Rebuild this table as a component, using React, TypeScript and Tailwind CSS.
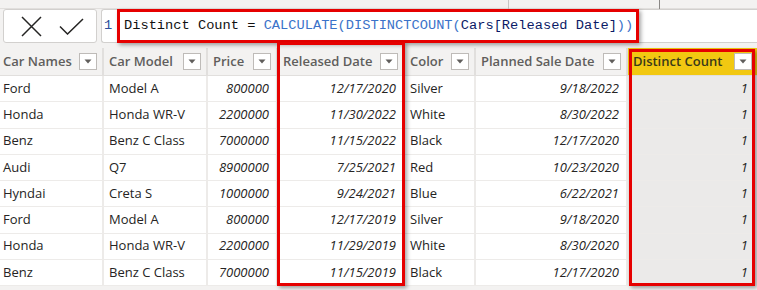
import React from "react";

const rows: string[][] = [
  ["Ford", "Model A", "800000", "12/17/2020", "Silver", "9/18/2022", "1"],
  ["Honda", "Honda WR-V", "2200000", "11/30/2022", "White", "8/30/2022", "1"],
  ["Benz", "Benz C Class", "7000000", "11/15/2022", "Black", "12/17/2020", "1"],
  ["Audi", "Q7", "8900000", "7/25/2021", "Red", "10/23/2020", "1"],
  ["Hyndai", "Creta S", "1000000", "9/24/2021", "Blue", "6/22/2021", "1"],
  ["Ford", "Model A", "800000", "12/17/2019", "Silver", "9/18/2020", "1"],
  ["Honda", "Honda WR-V", "2200000", "11/29/2019", "White", "8/30/2020", "1"],
  ["Benz", "Benz C Class", "7000000", "11/15/2019", "Black", "12/17/2020", "1"],
];

const numCols = [false, false, true, true, false, true, true];
const headers = ["Car Names", "Car Model", "Price", "Released Date", "Color", "Planned Sale Date", "Distinct Count"];

function Drop() {
  return (
    <div className="w-[18px] h-[17px] bg-white border border-[#bebbb8] flex items-center justify-center shrink-0">
      <svg width="8" height="5" viewBox="0 0 8 5">
        <path d="M0.5 0.5 L7.5 0.5 L4 4.5 Z" fill="#605e5c" />
      </svg>
    </div>
  );
}

export default function App() {
  return (
    <div className="relative w-[757px] h-[290px] overflow-hidden bg-[#f3f2f1]" style={{ fontFamily: "'Open Sans', 'Noto Sans', sans-serif" }}>
      {/* top strip */}
      <div className="relative h-[9px] border-b border-[#e1dfdd] bg-[#f3f2f1]">
        <div className="absolute left-[508px] top-0 h-[9px] w-px bg-[#c8c6c4]" />
        <div className="absolute left-[659px] top-0 h-[9px] w-px bg-[#8a8886]" />
      </div>
      {/* formula bar */}
      <div className="flex h-[34px] pl-[3px]">
        <div className="w-[94px] h-[34px] bg-white border border-[#d2d0ce] rounded-[3px] flex items-center pl-[17px] gap-[17px]">
          <svg width="21" height="21" viewBox="0 0 21 21">
            <path d="M1 1 L20 20 M20 1 L1 20" stroke="#252423" strokeWidth="1.5" fill="none" />
          </svg>
          <svg width="25" height="17" viewBox="0 0 25 17">
            <path d="M1 8.5 L8.5 16 L24 1" stroke="#252423" strokeWidth="1.5" fill="none" />
          </svg>
        </div>
        <div className="ml-[4px] flex-1 h-[34px] bg-white border border-r-0 border-[#d2d0ce] rounded-l-[3px] flex items-center pl-[2px] text-[13.7px] leading-none whitespace-pre" style={{ fontFamily: "'Liberation Mono', 'DejaVu Sans Mono', monospace" }}>
          <span className="text-[#2b4f9b] w-[20px]">1</span>
          <span className="text-[#111]">{"Distinct Count = "}</span>
          <span className="text-[#3a72c9]">CALCULATE(DISTINCTCOUNT(</span>
          <span className="text-[#0b1a66]">Cars[Released Date]</span>
          <span className="text-[#3a72c9]">))</span>
        </div>
      </div>
      <div className="h-[5px]" />
      {/* table */}
      <div className="grid grid-cols-[104px_104px_70px_127px_71px_152px_129px]">
        {headers.map((h, i) => (
          <div
            key={h}
            className={
              "h-[28px] flex items-center justify-between pr-[5px] border-b border-[#e1dfdd] " +
              (i === 0 ? "pl-[3px] " : "pl-[5px] ") +
              (i === 6 ? "bg-[#f2c811] text-[#3a3a1a]" : "bg-[#f3f2f1] text-[#605e5c] border-r-2 border-r-[#e1dfdd]")
            }
          >
            <span className="text-[13px] font-semibold whitespace-nowrap">{h}</span>
            <Drop />
          </div>
        ))}
        {rows.map((r, ri) =>
          r.map((c, ci) => (
            <div
              key={ri + "-" + ci}
              className={
                "h-[26.25px] flex items-center text-[13px] text-[#252423] border-b border-[#edebe9] whitespace-nowrap " +
                (numCols[ci] ? "justify-end italic pr-[7px] " : ci === 0 ? "pl-[3px] " : "pl-[5px] ") +
                (ci === 6 ? "bg-[#ebeae9] pr-[9px]" : "bg-white border-r-2 border-r-[#edebe9]")
              }
            >
              {c}
            </div>
          ))
        )}
      </div>
      {/* annotation boxes */}
      <div className="absolute left-[117px] top-[9px] w-[522px] h-[34px] border-[3px] border-[#e60000] shadow-[2px_2px_4px_rgba(0,0,0,0.35)]" />
      <div className="absolute left-[277px] top-[42px] w-[128px] h-[244px] border-[3px] border-[#e60000] shadow-[2px_2px_4px_rgba(0,0,0,0.35)]" />
      <div className="absolute left-[629px] top-[49px] w-[126px] h-[237px] border-[3px] border-[#e60000] shadow-[2px_2px_4px_rgba(0,0,0,0.35)]" />
    </div>
  );
}
